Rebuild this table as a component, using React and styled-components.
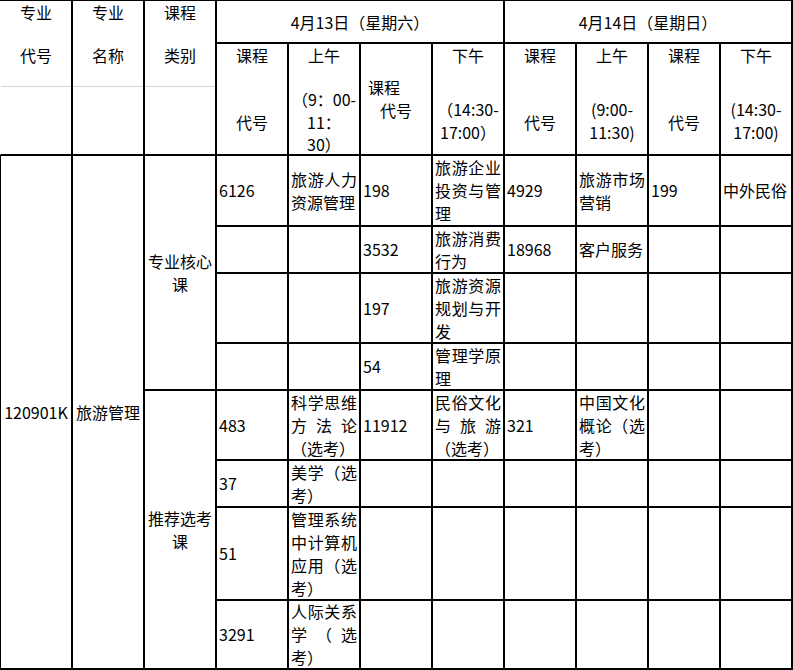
import React from 'react'
import styled, { createGlobalStyle } from 'styled-components'

const GlobalStyle = createGlobalStyle`
  *, *::before, *::after {
    box-sizing: border-box;
  }
  html, body {
    margin: 0;
    padding: 0;
    background: #fff;
    overflow: hidden;
  }
  body {
    font-family: 'Noto Sans CJK SC', 'Microsoft YaHei', sans-serif;
    color: #000;
  }
`

const Sheet = styled.div`
  display: grid;
  grid-template-columns: 74px repeat(10, 72px);
  grid-template-rows: 43px 112px 71px 47px 70px 47px 70px 47px 93px 69px;
  width: max-content;
  margin: -1px 0 0 -1px;
  border-top: 2px solid #000;
  font-size: 16px;
`

const Cell = styled.div`
  grid-column: ${p => p.$col} / span ${p => p.$cs || 1};
  grid-row: ${p => p.$row} / span ${p => p.$rs || 1};
  display: flex;
  align-items: center;
  min-width: 0;
  padding: 0 2px;
  border-right: 2px solid #000;
  border-bottom: 2px solid #000;
  border-left: ${p => (p.$first ? '2px solid #000' : '0')};
  line-height: 23px;
`

const Text = styled.span`
  display: block;
  width: 100%;
  text-align: ${p => p.$align || 'justify'};
`

const HeadCell = styled.div`
  grid-column: ${p => p.$col} / span ${p => p.$cs || 1};
  grid-row: ${p => p.$row} / span ${p => p.$rs || 1};
  display: flex;
  flex-direction: column;
  align-items: center;
  justify-content: ${p => (p.$middle ? 'center' : 'flex-start')};
  min-width: 0;
  border-right: 2px solid #000;
  border-bottom: 2px solid #000;
  border-left: ${p => (p.$first ? '2px solid transparent' : '0')};
  line-height: 22px;
  white-space: nowrap;
`

const TitleBlock = styled.div`
  align-self: stretch;
  display: flex;
  flex-direction: column;
  align-items: center;
  height: 86px;
  border-bottom: 1px solid #d4d4d4;
`

const Line = styled.span`
  display: block;
  margin-top: ${p => p.$mt || 0}px;
  margin-right: ${p => p.$shift || 0}px;
  line-height: ${p => p.$lh || 22}px;
`

const rows = [
  ['6126', '旅游人力资源管理', '198', '旅游企业投资与管理', '4929', '旅游市场营销', '199', '中外民俗'],
  ['', '', '3532', '旅游消费行为', '18968', '客户服务', '', ''],
  ['', '', '197', '旅游资源规划与开发', '', '', '', ''],
  ['', '', '54', '管理学原理', '', '', '', ''],
  ['483', '科学思维方法论（选考）', '11912', '民俗文化与旅游（选考）', '321', '中国文化概论（选考）', '', ''],
  ['37', '美学（选考）', '', '', '', '', '', ''],
  ['51', '管理系统中计算机应用（选考）', '', '', '', '', '', ''],
  ['3291', '人际关系学（选考）', '', '', '', '', '', ''],
]

const titles = [
  ['专业', '代号'],
  ['专业', '名称'],
  ['课程', '类别'],
]

function CodeHead({ col }) {
  return (
    <HeadCell $col={col} $row={2}>
      <Line>课程</Line>
      <Line $mt={45}>代号</Line>
    </HeadCell>
  )
}

function TimeHead({ col, label, from, to }) {
  return (
    <HeadCell $col={col} $row={2}>
      <Line>{label}</Line>
      <Line $mt={32} $lh={23}>{from}</Line>
      <Line $lh={23}>{to}</Line>
    </HeadCell>
  )
}

export default function App() {
  return (
    <>
      <GlobalStyle />
      <Sheet lang="zh-CN">
        {titles.map(([a, b], i) => (
          <HeadCell key={a + b} $col={i + 1} $row={1} $rs={2} $first={i === 0}>
            <TitleBlock>
              <Line>{a}</Line>
              <Line $mt={21}>{b}</Line>
            </TitleBlock>
          </HeadCell>
        ))}

        <HeadCell $col={4} $row={1} $cs={4} $middle>
          <Line>4月13日（星期六）</Line>
        </HeadCell>
        <HeadCell $col={8} $row={1} $cs={4} $middle>
          <Line>4月14日（星期日）</Line>
        </HeadCell>

        <CodeHead col={4} />
        <HeadCell $col={5} $row={2}>
          <Line>上午</Line>
          <Line $mt={22} $lh={22.5}>（9：00-</Line>
          <Line $lh={22.5}>11：</Line>
          <Line $lh={22.5}>30）</Line>
        </HeadCell>
        <HeadCell $col={6} $row={2} $middle>
          <Line $lh={23} $shift={24}>课程</Line>
          <Line $lh={23}>代号</Line>
        </HeadCell>
        <TimeHead col={7} label="下午" from="（14:30-" to="17:00）" />
        <CodeHead col={8} />
        <TimeHead col={9} label="上午" from="(9:00-" to="11:30)" />
        <CodeHead col={10} />
        <TimeHead col={11} label="下午" from="(14:30-" to="17:00)" />

        <Cell $col={1} $row={3} $rs={8} $first>
          <Text $align="center">120901K</Text>
        </Cell>
        <Cell $col={2} $row={3} $rs={8}>
          <Text $align="center">旅游管理</Text>
        </Cell>
        <Cell $col={3} $row={3} $rs={4}>
          <Text $align="center">专业核心课</Text>
        </Cell>
        <Cell $col={3} $row={7} $rs={4}>
          <Text $align="center">推荐选考课</Text>
        </Cell>

        {rows.map((row, r) =>
          row.map((value, c) => (
            <Cell key={`${r}-${c}`} $col={c + 4} $row={r + 3}>
              <Text>{value}</Text>
            </Cell>
          ))
        )}
      </Sheet>
    </>
  )
}
